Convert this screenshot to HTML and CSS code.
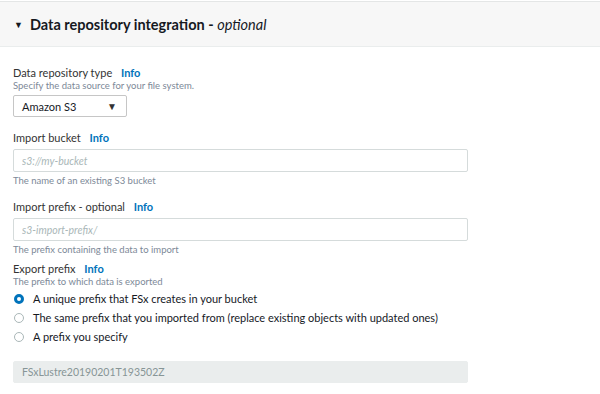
FILE: index.html
```html
<!DOCTYPE html>
<html lang="en">
<head>
    <meta charset="UTF-8">
    <title>Data repository integration</title>
    <link rel="stylesheet" href="styles.css">
</head>
<body>
    <div class="section-header">
        <span class="caret">&#9660;</span>
        <h2>Data repository integration - <i>optional</i></h2>
    </div>

    <div class="section-body">
        <div class="field first">
            <div class="label">Data repository type <a class="info">Info</a></div>
            <div class="desc">Specify the data source for your file system.</div>
            <div class="select">
                <span>Amazon S3</span>
                <span class="select-arrow">&#9660;</span>
            </div>
        </div>

        <div class="field">
            <div class="label">Import bucket <a class="info">Info</a></div>
            <input class="text-input" type="text" placeholder="s3://my-bucket">
            <div class="desc after">The name of an existing S3 bucket</div>
        </div>

        <div class="field close">
            <div class="label">Import prefix - optional <a class="info">Info</a></div>
            <input class="text-input" type="text" placeholder="s3-import-prefix/">
            <div class="desc after">The prefix containing the data to import</div>
        </div>

        <div class="field">
            <div class="label">Export prefix <a class="info">Info</a></div>
            <div class="desc">The prefix to which data is exported</div>
            <div class="radios">
                <label class="radio"><span class="dot checked"></span>A unique prefix that FSx creates in your bucket</label>
                <label class="radio"><span class="dot"></span>The same prefix that you imported from (replace existing objects with updated ones)</label>
                <label class="radio"><span class="dot"></span>A prefix you specify</label>
            </div>
            <input class="text-input disabled" type="text" value="FSxLustre20190201T193502Z" disabled>
        </div>
    </div>
</body>
</html>
```

FILE: styles.css
```css
body {
    margin: 0;
    font-family: Lato, "Open Sans", Arial, sans-serif;
    color: #333;
    background: #fff;
}
.section-header {
    margin-top: 1px;
    border-top: 1px solid #e4e6e6;
    border-bottom: 1px solid #eaeded;
    background-color: #f7f7f7;
    height: 44px;
    display: flex;
    align-items: center;
    padding-left: 14px;
}
.caret {
    font-size: 9px;
    color: #16191f;
    margin-right: 7px;
    margin-top: 1px;
}
.section-header h2 {
    margin: 0;
    font-size: 14.5px;
    font-weight: 700;
    color: #16191f;
}
.section-header h2 i {
    font-weight: 400;
}
.section-body {
    padding: 18px 13px 0 13px;
}
.field {
    margin-bottom: 12px;
}
.field.first {
    margin-bottom: 13px;
}
.field.close {
    margin-bottom: 5px;
}
.label {
    font-size: 11px;
    line-height: 15px;
    color: #333;
}
.info {
    font-weight: 700;
    color: #0073bb;
    margin-left: 6px;
}
.desc {
    font-size: 9.5px;
    line-height: 12px;
    color: #7d8998;
}
.desc.after {
    margin-top: 3px;
}
.select {
    margin-top: 3px;
    width: 114px;
    height: 22px;
    box-sizing: border-box;
    border: 1px solid #c6c6c6;
    border-radius: 2px;
    display: flex;
    align-items: center;
    justify-content: space-between;
    padding: 0 9px 0 8px;
    font-size: 11px;
    color: #16191f;
}
.select-arrow {
    font-size: 10px;
    color: #333;
}
.text-input {
    display: block;
    margin-top: 4px;
    width: 455px;
    height: 23px;
    box-sizing: border-box;
    border: 1px solid #d5dbdb;
    border-radius: 2px;
    padding: 0 8px;
    font-family: Lato, "Open Sans", Arial, sans-serif;
    font-size: 10.5px;
    color: #333;
    outline: none;
}
.text-input::placeholder {
    color: #aab7b8;
    font-style: italic;
}
.text-input.disabled {
    margin-top: 15px;
    height: 22px;
    background-color: #eaeded;
    border-color: #eaeded;
    color: #879596;
}
.radios {
    margin-top: 1px;
}
.radio {
    display: flex;
    align-items: center;
    height: 19px;
    font-size: 11px;
    color: #16191f;
}
.dot {
    width: 8px;
    height: 8px;
    border: 1px solid #aab7b8;
    border-radius: 50%;
    margin: 0 9px 0 1px;
    box-sizing: content-box;
}
.dot.checked {
    width: 4px;
    height: 4px;
    border: 3px solid #0073bb;
}
```
